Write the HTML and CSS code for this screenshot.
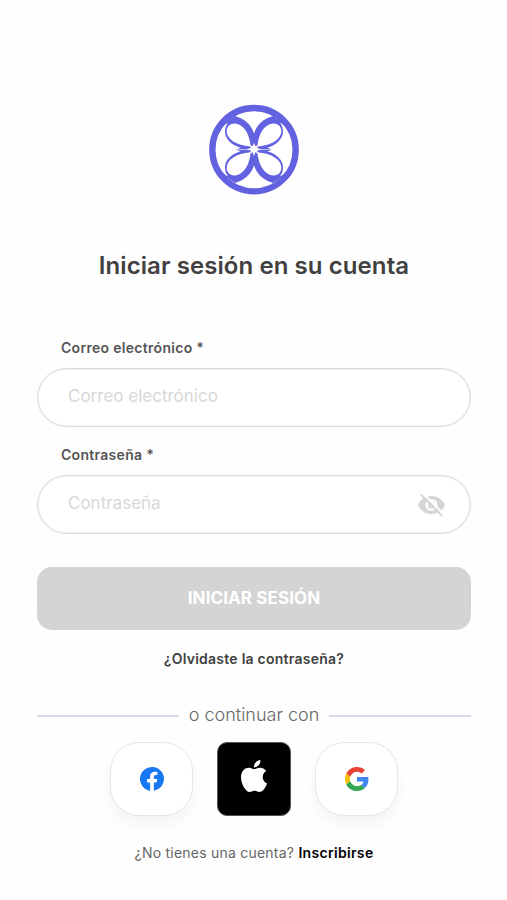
FILE: index.html
```html
<!DOCTYPE html>
<html lang="es">
<head>
<meta charset="utf-8">
<title>Iniciar sesión</title>
<link rel="stylesheet" href="styles.css">
</head>
<body>
<main class="page">
  <svg class="logo" viewBox="0 0 324 324" aria-hidden="true">
    <defs>
      <g id="petal">
        <path fill="#6261df" d="M56 94 L104 60 C136 68 154 88 162 113 V150 L155 158 L140 160 H108 Q114 158 122 155 C92 146 76 128 75 108 C75 96 78 88 84 80 C74 84 66 91 59 102Z"/>
        <path fill="#fff" d="M152 152 C108 148 81 130 80 106 C80 88 97 78 115 85 C137 94 149 120 152 152Z"/>
      </g>
      <g id="half"><use href="#petal"/><use href="#petal" transform="matrix(-1 0 0 1 324 0)"/></g>
    </defs>
    <circle cx="162" cy="161" r="125" fill="#fff" stroke="#6261df" stroke-width="19"/>
    <use href="#half"/>
    <use href="#half" transform="matrix(1 0 0 -1 0 321)"/>
    <path fill="#fff" d="M162 140 L166 151 L175 147 L171 156 L184 160 L171 164 L175 173 L166 169 L162 181 L158 169 L149 173 L153 164 L140 160 L153 156 L149 147 L158 151Z"/>
  </svg>
  <h1 class="title"><span>Iniciar sesión en su cuenta</span></h1>
  <form class="form">
    <label class="label" for="email"><span>Correo electrónico *</span></label>
    <div class="field"><input id="email" type="email" placeholder="Correo electrónico"></div>
    <label class="label second" for="password"><span>Contraseña *</span></label>
    <div class="field"><input id="password" type="password" placeholder="Contraseña">
      <svg class="eye" viewBox="0 0 27 24" aria-hidden="true">
        <path fill="#d5d5d5" fill-rule="evenodd" d="M0 12C2.2 6.6 7.2 3 13.500 3S24.800 6.600 27 12C24.800 17.400 19.800 21 13.500 21S2.200 17.400 0 12ZM13.500 6A6 6 0 1 0 13.500 18A6 6 0 1 0 13.500 6ZM13.500 8.500A3.500 3.500 0 1 1 13.500 15.500A3.500 3.500 0 1 1 13.500 8.500Z"/>
        <path d="M4.500 0L26 21.500" stroke="#fff" stroke-width="2"/>
        <path d="M2.800 1.500L24.200 23" stroke="#d5d5d5" stroke-width="2"/>
      </svg>
    </div>
    <button class="submit" type="button"><span>INICIAR SESIÓN</span></button>
  </form>
  <a class="forgot"><span>¿Olvidaste la contraseña?</span></a>
  <div class="divider"><span>o continuar con</span></div>
  <div class="social">
    <button class="provider" type="button" aria-label="Facebook">
      <svg width="24" height="24" viewBox="0 0 24 24"><path fill="#1877f2" d="M24 12a12 12 0 1 0-13.900 11.850v-8.380H7.080V12h3.020V9.360c0-3 1.800-4.670 4.540-4.670 1.310 0 2.680.230 2.680.230v2.960h-1.510c-1.490 0-1.950.930-1.950 1.870V12h3.330l-.530 3.470h-2.800v8.380A12 12 0 0 0 24 12Z"/></svg>
    </button>
    <button class="provider apple" type="button" aria-label="Apple">
      <svg width="26" height="32" viewBox="0 0 814 1000"><path fill="#fff" d="M788 341c-6 4-108 62-108 190 0 148 130 200 134 202-1 3-21 72-69 142-42 62-87 124-155 124s-85-40-164-40c-76 0-103 41-165 41s-105-57-155-127C46 790 0 663 0 541c0-194 126-297 250-297 66 0 121 43 163 43 39 0 101-46 176-46 28 0 130 3 199 100ZM555 159c31-37 53-88 53-139 0-7-1-14-2-20-50 2-111 34-147 76-28 32-55 83-55 135 0 8 1 16 2 18 3 1 8 1 13 1 45 0 103-30 136-71Z"/></svg>
    </button>
    <button class="provider" type="button" aria-label="Google">
      <svg width="24" height="24" viewBox="0 0 48 48"><path fill="#ea4335" d="M24 9.500c3.540 0 6.710 1.220 9.210 3.600l6.850-6.850C35.900 2.380 30.470 0 24 0 14.620 0 6.510 5.380 2.560 13.220l7.980 6.190C12.430 13.720 17.740 9.500 24 9.500Z"/><path fill="#4285f4" d="M46.980 24.550c0-1.570-.150-3.090-.380-4.550H24v9.020h12.940c-.580 2.960-2.260 5.480-4.780 7.180l7.730 6C44.400 38.020 46.980 31.840 46.980 24.550Z"/><path fill="#fbbc05" d="M10.530 28.590A14.500 14.500 0 0 1 9.770 24c0-1.600.270-3.140.760-4.590l-7.980-6.190A24 24 0 0 0 0 24c0 3.870.920 7.540 2.560 10.780l7.970-6.190Z"/><path fill="#34a853" d="M24 48c6.480 0 11.930-2.130 15.890-5.810l-7.730-6c-2.150 1.450-4.920 2.300-8.160 2.300-6.260 0-11.570-4.220-13.470-9.910l-7.980 6.190C6.510 42.620 14.620 48 24 48Z"/></svg>
    </button>
  </div>
  <p class="signup"><span>¿No tienes una cuenta?</span> <a>Inscribirse</a></p>
</main>
</body>
</html>
```
FILE: styles.css
```css
* { box-sizing: border-box; }

body {
  margin: 0;
  background: #fefefe;
  color: #414141;
  font-family: Inter, "Liberation Sans", sans-serif;
}

.page {
  display: flex;
  flex-direction: column;
  align-items: center;
  width: 507px;
  height: 900px;
  padding: 96px 36px 0 37px;
}

.logo { width: 108px; height: 108px; flex: none; }

.title {
  margin: 46px 0 0;
  font-size: 24px;
  line-height: 32px;
  font-weight: 600;
  letter-spacing: .08px;
  white-space: nowrap;
}

.form { width: 100%; margin-top: 56px; }

.label {
  display: block;
  height: 20px;
  padding-left: 24px;
  color: #555;
  font-size: 14px;
  line-height: 20px;
  font-weight: 600;
  letter-spacing: .3px;
}

.label.second { margin-top: 18px; }

.field {
  display: flex;
  align-items: center;
  height: 59px;
  margin-top: 10px;
  padding: 0 25px 0 30px;
  border: 1px solid #d9d9d9;
  border-radius: 30px;
  background: #fff;
  box-shadow: inset 0 0 0 1px #f2f2f2;
}

.field input {
  flex: 1;
  min-width: 0;
  padding: 0 0 3px;
  border: 0;
  outline: 0;
  background: none;
  font: 400 17px/24px Inter, sans-serif;
}

.field input::placeholder { color: #d8d8d8; opacity: 1; }

.eye { width: 27px; height: 24px; flex: none; }

.submit {
  display: block;
  width: 100%;
  height: 63px;
  margin-top: 33px;
  padding: 0 0 2px;
  border: 0;
  border-radius: 15px;
  background: #d4d4d4;
  color: #fff;
  font: 700 17px/24px Inter, sans-serif;
  letter-spacing: .1px;
}

.forgot {
  margin-top: 19px;
  font-size: 14px;
  line-height: 20px;
  font-weight: 600;
  letter-spacing: .25px;
}

.divider {
  display: flex;
  align-items: center;
  gap: 10px;
  width: 100%;
  height: 24px;
  margin-top: 34px;
  color: #666;
  font-size: 18px;
  line-height: 24px;
  font-weight: 300;
  white-space: nowrap;
}

.divider::before,
.divider::after {
  content: "";
  flex: 1;
  height: 2px;
  margin-top: 1px;
  background: #d9d8e4;
}

.social {
  display: flex;
  justify-content: center;
  gap: 24px;
  margin-top: 15px;
}

.provider {
  display: flex;
  align-items: center;
  justify-content: center;
  width: 83px;
  height: 74px;
  padding: 0;
  border: 1px solid #e6e6e6;
  border-radius: 29px;
  background: #fff;
  box-shadow: 0 9px 14px rgba(0, 0, 0, .04);
}

.provider.apple {
  width: 74px;
  padding-bottom: 7px;
  border-color: #555;
  border-radius: 10px;
  background: #000;
  box-shadow: none;
}

.signup {
  margin: 27px 0 0;
  color: #666;
  font-size: 14px;
  line-height: 20px;
  letter-spacing: .23px;
  white-space: nowrap;
}

.signup a { color: #000; font-weight: 600; letter-spacing: .32px; }
```
